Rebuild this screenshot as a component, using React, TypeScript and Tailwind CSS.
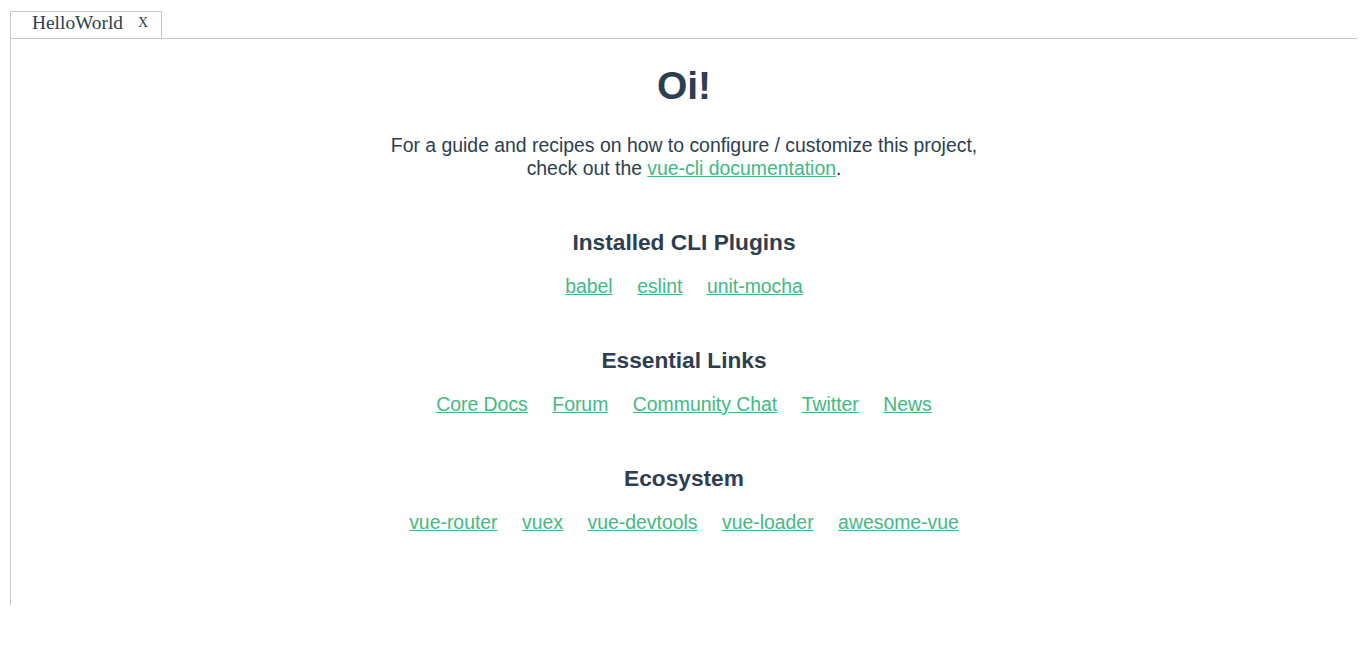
const plugins = ["babel", "eslint", "unit-mocha"];
const essentials = ["Core Docs", "Forum", "Community Chat", "Twitter", "News"];
const ecosystem = ["vue-router", "vuex", "vue-devtools", "vue-loader", "awesome-vue"];

function LinkRow({ items }: { items: string[] }) {
  return (
    <ul className="mt-[20px] flex justify-center gap-[24.5px] text-[19.4px] leading-[23px]">
      {items.map((name) => (
        <li key={name}>
          <a href="#" className="text-[#42b983] underline">
            {name}
          </a>
        </li>
      ))}
    </ul>
  );
}

function Section({ title, items }: { title: string; items: string[] }) {
  return (
    <div>
      <h3 className="mt-[49px] text-[22.7px] leading-[26px] font-bold">{title}</h3>
      <LinkRow items={items} />
    </div>
  );
}

export default function App() {
  return (
    <div className="min-h-[653px] bg-white pt-[11px] pl-[10px]">
      {/* Tab strip */}
      <div
        className="flex h-[27px] w-[152px] items-center border border-b-0 border-[#c8c8c8] pb-[4px] pl-[21px] text-[#2c3e50]"
        style={{ fontFamily: '"Liberation Serif", "Times New Roman", serif' }}
      >
        <span className="text-[19.4px] leading-none">HelloWorld</span>
        <span className="ml-[15px] text-[14px] leading-none">X</span>
      </div>

      {/* Tab panel */}
      <div
        className="h-[567px] w-[1347px] border-t border-l border-[#c8c8c8] text-center text-[#2c3e50]"
        style={{ fontFamily: '"Liberation Sans", Arial, Helvetica, sans-serif' }}
      >
        <h1 className="pt-[25px] text-[39px] leading-[43px] font-bold">Oi!</h1>
        <p className="mt-[27px] text-[19.4px] leading-[23px]">
          For a guide and recipes on how to configure / customize this project,
          <br />
          check out the{" "}
          <a href="#" className="text-[#42b983] underline">
            vue-cli documentation
          </a>
          .
        </p>
        <Section title="Installed CLI Plugins" items={plugins} />
        <Section title="Essential Links" items={essentials} />
        <Section title="Ecosystem" items={ecosystem} />
      </div>
    </div>
  );
}
